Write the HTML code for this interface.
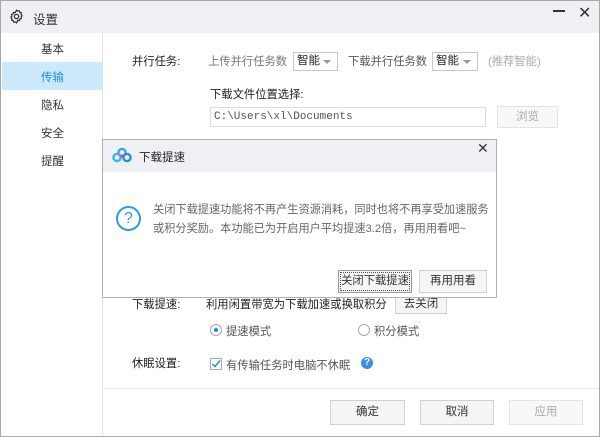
<!DOCTYPE html>
<html><head><meta charset="utf-8"><style>
*{margin:0;padding:0;box-sizing:border-box}
body{width:600px;height:437px;overflow:hidden;background:#fff;font-family:"Liberation Sans","Noto Sans CJK SC",sans-serif;font-size:11.3px;color:#333;position:relative}
.abs{position:absolute;white-space:nowrap}
.win{left:0;top:0;width:600px;height:437px;border:1px solid #a8a8a8}
.tb{left:1px;top:1px;width:598px;height:32px;background:#eef0f4}
.side{left:1px;top:33px;width:102px;height:403px;border-right:1px solid #e4e4e4}
.nav{position:absolute;left:41px;font-size:11.5px;color:#333}
.sel{border:1px solid #c8c8c8;background:#fff;height:19px;font-size:11.5px;color:#222;padding-left:3px;line-height:17px}
.sel:after{content:"";position:absolute;right:6px;top:7px;border-left:4px solid transparent;border-right:4px solid transparent;border-top:4px solid #999}
.btn{border:1px solid #d0d0d0;background:#f5f5f5;text-align:center;font-size:11.5px;color:#333}
</style></head><body>
<div class="abs win"></div>
<div class="abs tb"></div>
<svg class="abs" style="left:9px;top:9px" width="15" height="15" viewBox="0 0 16 16"><path d="M8 1.2l1.3 1.1 1.7-.3.6 1.6 1.6.6-.3 1.7 1.1 1.3-1.1 1.3.3 1.7-1.6.6-.6 1.6-1.7-.3L8 14.8l-1.3-1.1-1.7.3-.6-1.6-1.6-.6.3-1.7L2 8.8 3.1 7.5l-.3-1.7 1.6-.6.6-1.6 1.7.3z" fill="none" stroke="#333" stroke-width="1.3"/><circle cx="8" cy="8" r="2.3" fill="none" stroke="#333" stroke-width="1.3"/></svg>
<div class="abs" style="left:33px;top:9px;font-size:12.5px;color:#333">设置</div>
<div class="abs" style="left:553px;top:10px;width:12px;height:1.5px;background:#333"></div>
<div class="abs" style="left:578px;top:3px;font-size:16px;color:#333">✕</div>
<div class="abs side"></div>
<div class="abs" style="left:2px;top:62px;width:101px;height:28px;background:#cce8fb"></div>
<div class="nav" style="top:41px">基本</div>
<div class="nav" style="top:69px;color:#1a8fe0">传输</div>
<div class="nav" style="top:97px">隐私</div>
<div class="nav" style="top:125px">安全</div>
<div class="nav" style="top:153px">提醒</div>

<div class="abs" style="left:132px;top:53px;color:#222">并行任务:</div>
<div class="abs" style="left:208px;top:53px;color:#777">上传并行任务数</div>
<div class="abs sel" style="left:293px;top:52px;width:45px">智能</div>
<div class="abs" style="left:348px;top:53px;color:#555">下载并行任务数</div>
<div class="abs sel" style="left:432px;top:52px;width:46px">智能</div>
<div class="abs" style="left:488px;top:53px;color:#aaa">(推荐智能)</div>
<div class="abs" style="left:210px;top:86px;color:#222">下载文件位置选择:</div>
<div class="abs" style="left:210px;top:107px;width:276px;height:20px;border:1px solid #ddd;font-family:'Liberation Mono',monospace;font-size:11px;color:#555;padding:3px 0 0 3px">C:\Users\xl\Documents</div>
<div class="abs btn" style="left:497px;top:106px;width:61px;height:22px;line-height:20px;color:#aaa;border-color:#e4e4e4;background:#f8f8f8">浏览</div>

<div class="abs" style="left:132px;top:296px;color:#222">下载提速:</div>
<div class="abs" style="left:206px;top:296px;color:#222">利用闲置带宽为下载加速或换取积分</div>
<div class="abs btn" style="left:395px;top:294px;width:52px;height:20px;line-height:18px">去关闭</div>
<div class="abs" style="left:210px;top:324px;width:12px;height:12px;border:1px solid #aaa;border-radius:50%"><div style="margin:3px;width:4px;height:4px;border-radius:50%;background:#1a8fe0"></div></div>
<div class="abs" style="left:226px;top:323px;color:#555">提速模式</div>
<div class="abs" style="left:358px;top:324px;width:12px;height:12px;border:1px solid #aaa;border-radius:50%"></div>
<div class="abs" style="left:374px;top:323px;color:#555">积分模式</div>
<div class="abs" style="left:132px;top:355px;color:#222">休眠设置:</div>
<div class="abs" style="left:210px;top:358px;width:12px;height:12px;border:1px solid #aaa"><svg width="10" height="10" style="position:absolute;left:0;top:0"><path d="M1.5 5l2.5 2.5 5-6" fill="none" stroke="#1a8fe0" stroke-width="1.5"/></svg></div>
<div class="abs" style="left:226px;top:357px;color:#555">有传输任务时电脑不休眠</div>
<div class="abs" style="left:361px;top:357px;width:12px;height:12px;border-radius:50%;background:#3b8de6;color:#fff;font-size:10px;font-weight:bold;text-align:center;line-height:12px">?</div>

<div class="abs" style="left:104px;top:388px;width:495px;height:1px;background:#e8e8e8"></div>
<div class="abs btn" style="left:330px;top:400px;width:75px;height:25px;line-height:23px">确定</div>
<div class="abs btn" style="left:420px;top:400px;width:74px;height:25px;line-height:23px">取消</div>
<div class="abs btn" style="left:509px;top:400px;width:74px;height:25px;line-height:23px;color:#aaa;background:#f8f8f8;border-color:#e4e4e4">应用</div>

<!-- dialog -->
<div class="abs" style="left:102px;top:139px;width:395px;height:159px;border:1px solid #b0b0b0;background:#fff"></div>
<div class="abs" style="left:103px;top:140px;width:393px;height:32px;background:#eef0f4"></div>
<svg class="abs" style="left:112px;top:147px" width="20" height="16" viewBox="0 0 20 16"><circle cx="10" cy="5.5" r="3.6" fill="none" stroke="#2aa7f5" stroke-width="2.4"/><circle cx="5" cy="10.5" r="3.6" fill="none" stroke="#3ab3f0" stroke-width="2.4"/><circle cx="15" cy="10.5" r="3.6" fill="none" stroke="#1f8fe6" stroke-width="2.4"/><circle cx="10" cy="9" r="1.6" fill="#f04a5a"/></svg>
<div class="abs" style="left:139px;top:149px;font-size:11.5px;color:#222">下载提速</div>
<div class="abs" style="left:477px;top:140px;font-size:14px;color:#333">✕</div>
<div class="abs" style="left:116px;top:206px;width:25px;height:25px;border:2px solid #2c9be8;border-radius:50%;color:#2c9be8;font-size:16px;text-align:center;line-height:21px">?</div>
<div class="abs" style="left:153px;top:201px;font-size:11.2px;color:#666;line-height:19px">关闭下载提速功能将不再产生资源消耗，同时也将不再享受加速服务<br>或积分奖励。本功能已为开启用户平均提速3.2倍，再用用看吧~</div>
<div class="abs btn" style="left:338px;top:270px;width:74px;height:23px;line-height:21px;border-color:#999;outline:1px dotted #555;outline-offset:-3px;font-size:11.3px">关闭下载提速</div>
<div class="abs btn" style="left:419px;top:270px;width:68px;height:23px;line-height:21px">再用用看</div>
</body></html>
